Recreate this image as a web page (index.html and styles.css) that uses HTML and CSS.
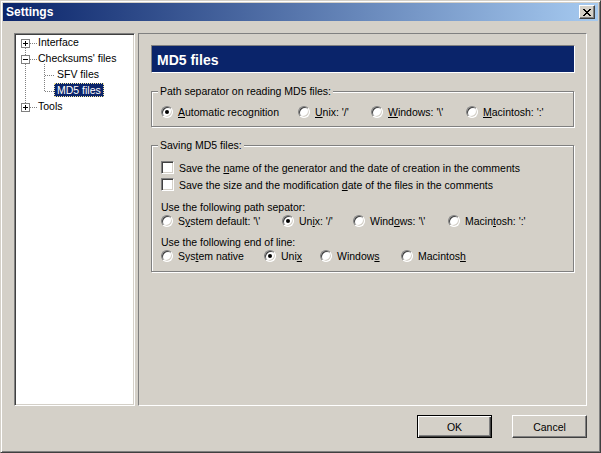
FILE: index.html
```html
<!DOCTYPE html>
<html>
<head>
<meta charset="utf-8">
<title>Settings</title>
<link rel="stylesheet" href="styles.css">
</head>
<body>
<div class="window">
  <div class="titlebar">
    <span class="title">Settings</span>
    <button class="close" aria-label="Close">
      <svg width="14" height="12" viewBox="0 0 14 12" shape-rendering="crispEdges">
        <path fill="#000" d="M3 3h2v1h-2zM9 3h2v1h-2zM4 4h2v1h-2zM8 4h2v1h-2zM5 5h2v1h-2zM7 5h2v1h-2zM6 6h2v1h-2zM5 7h2v1h-2zM7 7h2v1h-2zM4 8h2v1h-2zM8 8h2v1h-2zM3 9h2v1h-2zM9 9h2v1h-2z"/>
      </svg>
    </button>
  </div>
  <div class="client">
    <div class="main">
      <div class="tree">
        <svg class="tree-lines" width="117" height="80" viewBox="0 0 117 80" shape-rendering="crispEdges">
          <g stroke="#808080" stroke-width="1" stroke-dasharray="1 1" fill="none">
            <line x1="9.5" y1="13" x2="9.5" y2="68"/>
            <line x1="14" y1="8.5" x2="21" y2="8.5"/>
            <line x1="14" y1="24.5" x2="21" y2="24.5"/>
            <line x1="14" y1="72.5" x2="21" y2="72.5"/>
            <line x1="28.5" y1="29" x2="28.5" y2="57"/>
            <line x1="29" y1="40.5" x2="38" y2="40.5"/>
            <line x1="29" y1="56.5" x2="38" y2="56.5"/>
          </g>
          <g fill="#fff" stroke="#808080">
            <rect x="5.5" y="4.5" width="8" height="8"/>
            <rect x="5.5" y="20.5" width="8" height="8"/>
            <rect x="5.5" y="68.5" width="8" height="8"/>
          </g>
          <g stroke="#000">
            <line x1="7" y1="8.5" x2="12" y2="8.5"/>
            <line x1="9.5" y1="6" x2="9.5" y2="11"/>
            <line x1="7" y1="24.5" x2="12" y2="24.5"/>
            <line x1="7" y1="72.5" x2="12" y2="72.5"/>
            <line x1="9.5" y1="70" x2="9.5" y2="75"/>
          </g>
        </svg>
        <ul class="tree-list">
          <li class="node lvl0"><span class="label">Interface</span></li>
          <li class="node lvl0"><span class="label">Checksums' files</span></li>
          <li class="node lvl1"><span class="label">SFV files</span></li>
          <li class="node lvl1"><span class="label sel">MD5 files</span></li>
          <li class="node lvl0"><span class="label">Tools</span></li>
        </ul>
      </div>
      <div class="panel">
        <div class="header">MD5 files</div>
        <fieldset class="group">
          <legend>Path separator on reading MD5 files:</legend>
          <div class="group-body g1">
            <div class="radios cols-1">
              <label class="opt"><span class="radio checked"></span><span><u>A</u>utomatic recognition</span></label>
              <label class="opt"><span class="radio"></span><span><u>U</u>nix: '/'</span></label>
              <label class="opt"><span class="radio"></span><span><u>W</u>indows: '\'</span></label>
              <label class="opt"><span class="radio"></span><span><u>M</u>acintosh: ':'</span></label>
            </div>
          </div>
        </fieldset>
        <fieldset class="group g2-set">
          <legend>Saving MD5 files:</legend>
          <div class="group-body g2">
            <label class="check-row"><span class="checkbox"></span><span>Save the <u>n</u>ame of the generator and the date of creation in the comments</span></label>
            <label class="check-row"><span class="checkbox"></span><span>Save the size and the modification <u>d</u>ate of the files in the comments</span></label>
            <div class="caption">Use the following path sepator:</div>
            <div class="radios cols-3">
              <label class="opt"><span class="radio"></span><span>S<u>y</u>stem default: '\'</span></label>
              <label class="opt"><span class="radio checked"></span><span>Un<u>i</u>x: '/'</span></label>
              <label class="opt"><span class="radio"></span><span>Wind<u>o</u>ws: '\'</span></label>
              <label class="opt"><span class="radio"></span><span>Macin<u>t</u>osh: ':'</span></label>
            </div>
            <div class="caption">Use the following end of line:</div>
            <div class="radios cols-4">
              <label class="opt"><span class="radio"></span><span>Sys<u>t</u>em native</span></label>
              <label class="opt"><span class="radio checked"></span><span>Uni<u>x</u></span></label>
              <label class="opt"><span class="radio"></span><span>Window<u>s</u></span></label>
              <label class="opt"><span class="radio"></span><span>Macintos<u>h</u></span></label>
            </div>
          </div>
        </fieldset>
      </div>
    </div>
    <div class="buttons">
      <button class="btn default">OK</button>
      <button class="btn">Cancel</button>
    </div>
  </div>
</div>
</body>
</html>
```
FILE: styles.css
```css
html, body {
  margin: 0;
  padding: 0;
  background: #d4d0c8;
}
body {
  font-family: "Liberation Sans", Arial, sans-serif;
  font-size: 10.5px;
  color: #000;
}
.window {
  box-sizing: border-box;
  width: 601px;
  height: 453px;
  border: 1px solid;
  border-color: #d4d0c8 #404040 #404040 #d4d0c8;
  box-shadow: inset 1px 1px #fff, inset -1px -1px #808080;
  padding: 2px;
  display: flex;
  flex-direction: column;
  background: #d4d0c8;
}
.titlebar {
  height: 18px;
  flex: none;
  display: flex;
  align-items: center;
  justify-content: space-between;
  background: linear-gradient(to right, #0a246a, #a6caf0);
  padding: 0 3px 0 3px;
}
.title {
  color: #fff;
  font-weight: bold;
  font-size: 12px;
  line-height: 18px;
}
.close {
  box-sizing: border-box;
  width: 16px;
  height: 14px;
  padding: 0;
  margin: 0;
  border: 1px solid;
  border-color: #fff #404040 #404040 #fff;
  box-shadow: inset -1px -1px #808080;
  background: #d4d0c8;
  display: block;
}
.close svg { display: block; }
.client {
  flex: 1;
  display: flex;
  flex-direction: column;
  padding: 12px 11px 12px 11px;
}
.main {
  display: flex;
  gap: 3px;
  height: 373px;
  flex: none;
}
.tree {
  box-sizing: border-box;
  width: 121px;
  flex: none;
  background: #fff;
  border: 1px solid;
  border-color: #808080 #fff #fff #808080;
  box-shadow: inset 1px 1px #404040, inset -1px -1px #d4d0c8;
  padding: 1px;
  position: relative;
}
.tree-lines {
  position: absolute;
  left: 1px;
  top: 1px;
}
.tree-list {
  list-style: none;
  margin: 0;
  padding: 0;
  position: relative;
}
.node {
  height: 16px;
  white-space: nowrap;
}
.lvl0 { padding-left: 19px; }
.lvl1 { padding-left: 38px; }
.label {
  display: inline-block;
  vertical-align: top;
  border: 1px solid transparent;
  padding: 0 2px;
  line-height: 12px;
}
.label.sel {
  background: #0a246a;
  color: #fff;
  border: 1px dotted #f3e7a0;
}
.panel {
  flex: 1;
  box-sizing: border-box;
  border: 1px solid;
  border-color: #808080 #fff #fff #808080;
  padding: 11px 11px 0 12px;
}
.header {
  box-sizing: border-box;
  height: 28px;
  background: #0a246a;
  border: 1px solid;
  border-color: #808080 #fff #fff #808080;
  color: #fff;
  font-weight: bold;
  font-size: 14px;
  line-height: 26px;
  padding: 1px 0 0 5px;
}
.group {
  margin: 12px 1px 0 0;
  padding: 0;
  border: 1px solid #808080;
  box-shadow: inset 1px 1px #fff, 1px 1px #fff;
  min-width: 0;
}
.group legend {
  padding: 0 2px;
  margin-left: 6px;
  line-height: 13px;
  background: #d4d0c8;
}
.group-body {
  padding: 7px 9px 7px 9px;
}
.group-body.g2 {
  padding: 7px 9px 8px 9px;
}
.radios {
  display: grid;
  height: 14px;
  align-items: center;
}
.cols-1 { grid-template-columns: 137px 73px 95px auto; }
.cols-3 { grid-template-columns: 121px 71px 95px auto; }
.cols-4 { grid-template-columns: 103px 56px 81px auto; }
.opt {
  display: flex;
  align-items: center;
  gap: 5px;
  white-space: nowrap;
  line-height: 14px;
}
.radio {
  box-sizing: border-box;
  width: 12px;
  height: 12px;
  flex: none;
  border-radius: 50%;
  background: #fff;
  border: 1px solid;
  border-color: #808080 #fff #fff #808080;
  box-shadow: inset 1px 1px #404040, inset -1px -1px #d4d0c8;
  display: flex;
  align-items: center;
  justify-content: center;
}
.radio.checked::after {
  content: "";
  width: 4px;
  height: 4px;
  border-radius: 50%;
  background: #000;
}
.check-row {
  display: flex;
  align-items: center;
  gap: 5px;
  height: 17px;
  white-space: nowrap;
}
.checkbox {
  box-sizing: border-box;
  width: 13px;
  height: 13px;
  flex: none;
  background: #fff;
  border: 1px solid;
  border-color: #808080 #fff #fff #808080;
  box-shadow: inset 1px 1px #404040, inset -1px -1px #d4d0c8;
}
.caption {
  margin-top: 8px;
  line-height: 13px;
}
.buttons {
  display: flex;
  justify-content: flex-end;
  gap: 20px;
  margin-top: 9px;
}
.btn {
  box-sizing: border-box;
  width: 75px;
  height: 23px;
  margin: 0;
  padding: 0;
  font: inherit;
  color: #000;
  background: #d4d0c8;
  border: 1px solid;
  border-color: #fff #404040 #404040 #fff;
  box-shadow: inset -1px -1px #808080;
}
.btn.default {
  border-color: #000;
  box-shadow: inset 1px 1px #fff, inset -1px -1px #404040, inset -2px -2px #808080;
}
```
